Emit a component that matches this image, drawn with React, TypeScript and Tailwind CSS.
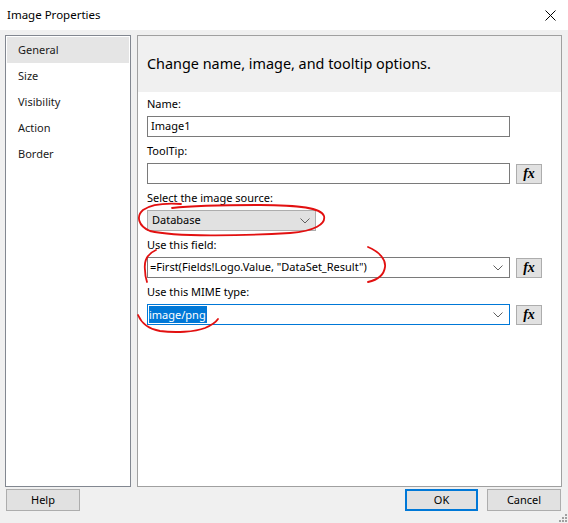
import { ReactNode } from "react";

const navItems = ["General", "Size", "Visibility", "Action", "Border"];

function Chevron() {
  return (
    <svg width="10" height="6" viewBox="0 0 10 6" className="shrink-0">
      <path d="M0.5 0.5 L5 5 L9.5 0.5" fill="none" stroke="#606060" strokeWidth="1" />
    </svg>
  );
}

function FxButton() {
  return (
    <button className="w-[26px] h-[20px] shrink-0 bg-[#e1e1e1] border border-[#adadad] flex items-center justify-center">
      <span className="font-['Liberation_Serif',serif] italic font-bold text-[14px] leading-none text-black">
        fx
      </span>
    </button>
  );
}

function Field({ label, children }: { label: string; children: ReactNode }) {
  return (
    <div className="flex flex-col h-[47px]">
      <div className="h-[16px] leading-[16px] mb-[4px]">{label}</div>
      {children}
    </div>
  );
}

export default function App() {
  return (
    <div className="relative w-[568px] h-[523px] bg-[#f0f0f0] flex flex-col font-['Noto_Sans',sans-serif] text-[11px] text-black overflow-hidden">
      {/* Title bar */}
      <div className="h-[30px] bg-white flex items-center justify-between pl-[7px] pr-[12px]">
        <span className="leading-none text-[11.5px]">Image Properties</span>
        <svg width="11" height="11" viewBox="0 0 11 11">
          <path d="M0.5 0.5 L10.5 10.5 M10.5 0.5 L0.5 10.5" stroke="#000" strokeWidth="1" />
        </svg>
      </div>

      {/* Body */}
      <div className="flex gap-[6px] pl-[5px] pt-[5px] h-[457px]">
        {/* Nav */}
        <div className="w-[126px] h-[452px] bg-white border border-[#828790] p-px">
          {navItems.map((item, i) => (
            <div
              key={item}
              className={`h-[26px] pl-[11px] flex items-center ${i === 0 ? "bg-[#e5e5e5]" : ""} text-[#1a1a1a]`}
            >
              {item}
            </div>
          ))}
        </div>

        {/* Page */}
        <div className="w-[425px] h-[452px] bg-white border border-[#a0a0a0] flex flex-col">
          <div className="h-[56px] bg-[#f0f0f0] flex items-center pl-[9px] text-[14.4px]">
            Change name, image, and tooltip options.
          </div>
          <div className="flex flex-col pl-[9px] pt-[4px]">
            <Field label="Name:">
              <div className="w-[363px] h-[21px] border border-[#7a7a7a] flex items-center pl-[3px]">Image1</div>
            </Field>
            <Field label="ToolTip:">
              <div className="flex items-center gap-[6px]">
                <div className="w-[363px] h-[21px] border border-[#7a7a7a]" />
                <FxButton />
              </div>
            </Field>
            <Field label="Select the image source:">
              <div className="w-[169px] h-[21px] bg-[#e1e1e1] border border-[#adadad] flex items-center justify-between pl-[4px] pr-[5px]">
                <span>Database</span>
                <Chevron />
              </div>
            </Field>
            <Field label="Use this field:">
              <div className="flex items-center gap-[6px]">
                <div className="w-[363px] h-[21px] border border-[#7a7a7a] flex items-center justify-between pl-[2px] pr-[6px]">
                  <span>=First(Fields!Logo.Value, "DataSet_Result")</span>
                  <Chevron />
                </div>
                <FxButton />
              </div>
            </Field>
            <Field label="Use this MIME type:">
              <div className="flex items-center gap-[6px]">
                <div className="w-[363px] h-[21px] border border-[#0078d7] flex items-center justify-between pl-px pr-[6px]">
                  <span className="bg-[#0078d7] text-white leading-[17px] pr-px">image/png</span>
                  <Chevron />
                </div>
                <FxButton />
              </div>
            </Field>
          </div>
        </div>
      </div>

      {/* Buttons */}
      <div className="flex items-start pl-[6px] pr-[7px] pt-[2px]">
        <button className="w-[74px] h-[22px] bg-[#e1e1e1] border border-[#adadad]">Help</button>
        <div className="flex-1" />
        <button className="w-[73px] h-[22px] bg-[#e1e1e1] border-2 border-[#0078d7]">OK</button>
        <button className="ml-[9px] w-[74px] h-[22px] bg-[#e1e1e1] border border-[#adadad]">Cancel</button>
      </div>

      {/* Resize grip */}
      <svg className="absolute right-[1px] bottom-[1px]" width="8" height="8" viewBox="0 0 8 8">
        <g fill="#a0a0a0">
          <rect x="6" y="0" width="2" height="2" />
          <rect x="3" y="3" width="2" height="2" />
          <rect x="6" y="3" width="2" height="2" />
          <rect x="0" y="6" width="2" height="2" />
          <rect x="3" y="6" width="2" height="2" />
          <rect x="6" y="6" width="2" height="2" />
        </g>
      </svg>

      {/* Red annotations */}
      <svg className="absolute inset-0 pointer-events-none" width="568" height="523" viewBox="0 0 568 523">
        <g fill="none" stroke="#e21010" strokeWidth="1.8" strokeLinecap="round" strokeLinejoin="round">
          <path d="M181 204 C165 203 150 205 143 210 C136 216 138 226 150 231 C175 237 240 236 290 233 C315 231 326 224 324 216 C321 208 300 205 260 205 C220 205 190 206 172 208" />
          <path d="M156 250 C147 254 144 262 145 270 C145 275 146 279 147 282" />
          <path d="M368 247 C380 252 386 260 385 267 C384 275 377 280 368 282" />
          <path d="M138 315 C141 322 148 329 160 331 C175 333 195 332 205 328 C212 325 216 322 218 319" />
        </g>
      </svg>
    </div>
  );
}
